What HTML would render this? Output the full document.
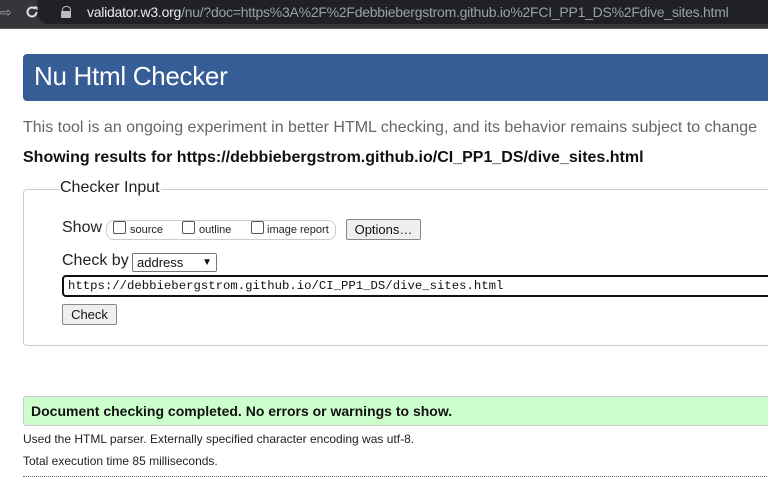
<!DOCTYPE html>
<html><head><style>
body{margin:0;width:768px;height:484px;overflow:hidden;background:#fff;font-family:"Liberation Sans",Arial,sans-serif;position:relative}
.a{position:absolute;white-space:nowrap}
</style></head><body>
<div class="a" style="left:0;top:0;width:768px;height:28px;background:#35363a;border-bottom:1px solid #555"></div>
<div class="a" style="left:37px;top:0;width:740px;height:24px;background:#202124;border-radius:0 0 12px 12px"></div>
<div class="a" style="left:0;top:4px;color:#9aa0a6;font-size:14px">⇨</div>
<svg class="a" style="left:24px;top:4px" width="16" height="16" viewBox="0 0 16 16"><path d="M12.5 8a4.5 4.5 0 1 1-1.3-3.2" stroke="#dadce0" stroke-width="2" fill="none"/><path d="M9.5 2.5h4v4z" fill="#dadce0"/></svg>
<div class="a" style="left:62px;top:6px;width:7px;height:6px;border:1.5px solid #bbb;border-bottom:none;border-radius:4px 4px 0 0"></div>
<div class="a" style="left:61px;top:11px;width:10px;height:7px;background:#bbb;border-radius:1px"></div>
<div class="a" style="left:87px;top:4px;font-size:14px;color:#9aa0a6;letter-spacing:-0.25px"><span style="color:#e8eaed">validator.w3.org</span>/nu/?doc=https%3A%2F%2Fdebbiebergstrom.github.io%2FCI_PP1_DS%2Fdive_sites.html</div>
<div class="a" style="left:23px;top:54px;width:760px;height:47px;background:#365d95;border-radius:4px"></div>
<div class="a" style="left:34px;top:61px;font-size:26px;color:#fff;letter-spacing:-0.3px">Nu Html Checker</div>
<div class="a" style="left:23px;top:119px;font-size:16px;color:#666">This tool is an ongoing experiment in better HTML checking, and its behavior remains subject to change</div>
<div class="a" style="left:23px;top:149px;font-size:16px;font-weight:bold;color:#111">Showing results for https://debbiebergstrom.github.io/CI_PP1_DS/dive_sites.html</div>
<div class="a" style="left:23px;top:189px;width:760px;height:155px;border:1px solid #ccc;border-radius:4px"></div>
<div class="a" style="left:59px;top:179px;font-size:16px;color:#222;background:#fff;padding:0 1px">Checker Input</div>
<div class="a" style="left:62px;top:219px;font-size:16px;color:#222">Show</div>
<div class="a" style="left:106px;top:220px;width:228px;height:18px;border:1px solid #ccc;border-radius:8px"></div>
<div class="a" style="left:113px;top:221px;width:11px;height:11px;border:1px solid #555;border-radius:2px"></div>
<div class="a" style="left:130px;top:224px;font-size:11px;color:#222">source</div>
<div class="a" style="left:182px;top:221px;width:11px;height:11px;border:1px solid #555;border-radius:2px"></div>
<div class="a" style="left:199px;top:224px;font-size:11px;color:#222">outline</div>
<div class="a" style="left:251px;top:221px;width:11px;height:11px;border:1px solid #555;border-radius:2px"></div>
<div class="a" style="left:267px;top:224px;font-size:11px;color:#222">image report</div>
<div class="a" style="left:346px;top:219px;width:73px;height:19px;border:1px solid #888;border-radius:2px;background:#efefef;font-size:13px;line-height:19px;text-align:center;color:#111">Options…</div>
<div class="a" style="left:62px;top:252px;font-size:16px;color:#222">Check by</div>
<div class="a" style="left:132px;top:253px;width:79px;height:17px;border:1px solid #777;border-radius:2px;font-size:13px;line-height:17px;padding-left:4px;color:#111">address<span style="position:absolute;right:4px;top:0;font-size:10px">▼</span></div>
<div class="a" style="left:62px;top:275px;width:720px;height:18px;border:2px solid #111;border-radius:4px;font-family:'Liberation Mono',monospace;font-size:12.3px;line-height:18px;padding-left:4px;color:#111">https://debbiebergstrom.github.io/CI_PP1_DS/dive_sites.html</div>
<div class="a" style="left:62px;top:304px;width:53px;height:19px;border:1px solid #888;border-radius:2px;background:#efefef;font-size:13px;line-height:19px;text-align:center;color:#111">Check</div>
<div class="a" style="left:23px;top:396px;width:760px;height:28px;background:#ccffcc;border:1px solid #ccc;border-radius:3px"></div>
<div class="a" style="left:31px;top:403px;font-size:14px;font-weight:bold;color:#111">Document checking completed. No errors or warnings to show.</div>
<div class="a" style="left:23px;top:432px;font-size:12px;color:#222">Used the HTML parser. Externally specified character encoding was utf-8.</div>
<div class="a" style="left:23px;top:454px;font-size:12px;color:#222">Total execution time 85 milliseconds.</div>
<div class="a" style="left:23px;top:476px;width:760px;border-top:1px dotted #666"></div>
</body></html>
